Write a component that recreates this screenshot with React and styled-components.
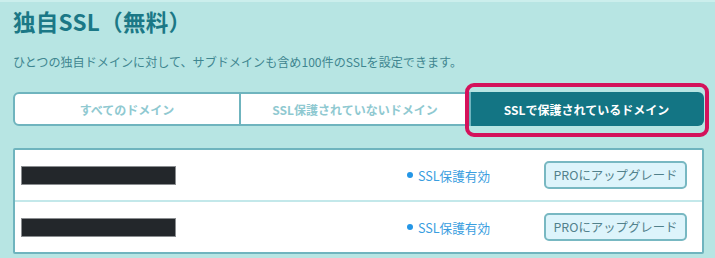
import styled, { createGlobalStyle } from "styled-components";

const GlobalStyle = createGlobalStyle`
  html, body {
    margin: 0;
    padding: 0;
    background: #b7e5e3;
  }
  body {
    font-family: "Noto Sans CJK JP", "Noto Sans", sans-serif;
  }
`;

const domains = [
  { id: 1, status: "SSL保護有効" },
  { id: 2, status: "SSL保護有効" },
];

const tabs = ["すべてのドメイン", "SSL保護されていないドメイン", "SSLで保護されているドメイン"];

const App = () => {
  return (
    <Page>
      <GlobalStyle />
      <Title>独自SSL（無料）</Title>
      <Lead>ひとつの独自ドメインに対して、サブドメインも含め100件のSSLを設定できます。</Lead>
      <Tabs>
        {tabs.map((t, i) => (
          <Tab key={t} $active={i === 2}>
            {t}
          </Tab>
        ))}
      </Tabs>
      <Table>
        {domains.map(d => (
          <Row key={d.id}>
            <Redacted />
            <Status>{d.status}</Status>
            <UpgradeButton>PROにアップグレード</UpgradeButton>
          </Row>
        ))}
      </Table>
    </Page>
  );
};

export default App;

/* ---------------------------- STYLED COMPONENTS --------------------------- */

const Page = styled.div`
  width: 715px;
  height: 258px;
  box-sizing: border-box;
  border-top: 2px solid #cbeeec;
  padding: 5px 11px 0 13px;
  overflow: hidden;
`;

const Title = styled.h1`
  margin: 0;
  font-size: 22.5px;
  line-height: 28px;
  font-weight: 700;
  color: #1b7886;
  letter-spacing: 0.3px;
`;

const Lead = styled.p`
  margin: 18px 0 0;
  font-size: 12.1px;
  line-height: 18px;
  color: #3f8690;
`;

const Tabs = styled.div`
  margin-top: 21px;
  display: grid;
  grid-template-columns: 228px 230px 1fr;
  height: 34px;
`;

const Tab = styled.div`
  position: relative;
  display: flex;
  align-items: center;
  justify-content: center;
  font-size: 12px;
  font-weight: 700;
  color: ${p => (p.$active ? "#ffffff" : "#8fc9d1")};
  background: ${p => (p.$active ? "#137584" : "#ffffff")};
  border: 2px solid ${p => (p.$active ? "#137584" : "#6fb4be")};
  border-left-width: 0;

  &:first-child {
    border-left-width: 2px;
    border-radius: 6px 0 0 6px;
  }

  &:last-child {
    border-radius: 0 6px 6px 0;
  }

  ${p =>
    p.$active &&
    `
    &::after {
      content: "";
      position: absolute;
      top: -11px;
      bottom: -13px;
      left: -6px;
      right: -7px;
      border: 4px solid #d4125b;
      border-radius: 9px;
    }
  `}
`;

const Table = styled.div`
  margin-top: 22px;
  background: #ffffff;
  border: 2px solid #6fb4be;
  border-radius: 2px;
`;

const Row = styled.div`
  display: flex;
  align-items: center;
  height: 50px;
  padding: 0 15px 0 6px;

  & + & {
    border-top: 2px solid #c3e8ea;
  }
`;

const Redacted = styled.div`
  width: 155px;
  height: 19px;
  background: #23272b;
  border: 1px solid #8a8d90;
  box-sizing: border-box;
`;

const Status = styled.span`
  margin-left: auto;
  display: flex;
  align-items: center;
  gap: 5px;
  font-size: 12.6px;
  color: #3a9ee0;

  &::before {
    content: "";
    width: 6px;
    height: 6px;
    border-radius: 50%;
    background: #2496e6;
  }
`;

const UpgradeButton = styled.button`
  margin-left: 54px;
  width: 143px;
  height: 28px;
  font-family: inherit;
  font-size: 12.4px;
  color: #52818b;
  background: #ddf4fb;
  border: 2px solid #78b8c2;
  border-radius: 5px;
  cursor: pointer;
`;
